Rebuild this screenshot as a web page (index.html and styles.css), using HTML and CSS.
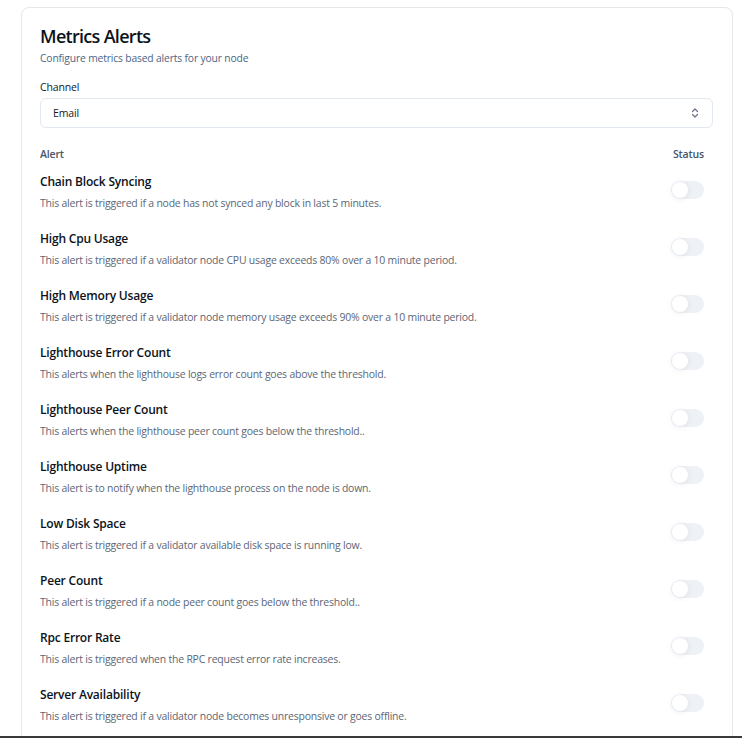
FILE: index.html
```html
<!DOCTYPE html>
<html>
<head>
<meta charset="utf-8">
<link rel="stylesheet" href="styles.css">
</head>
<body>
<div class="card">
  <h1 class="title">Metrics Alerts</h1>
  <p class="subtitle">Configure metrics based alerts for your node</p>
  <label class="label">Channel</label>
  <div class="select">
    <span>Email</span>
    <svg class="chev" width="10" height="12" viewBox="0 0 10 12" fill="none" stroke="#6b7280" stroke-width="1.2" stroke-linecap="round" stroke-linejoin="round"><path d="M2.5 4.5 5 2l2.5 2.5M2.5 7.5 5 10l2.5-2.5"/></svg>
  </div>
  <div class="thead">
    <span>Alert</span>
    <span>Status</span>
  </div>
  <div class="rows">
    <div class="row"><div class="info"><div class="name">Chain Block Syncing</div><div class="desc">This alert is triggered if a node has not synced any block in last 5 minutes.</div></div><div class="toggle"><span class="knob"></span></div></div>
    <div class="row"><div class="info"><div class="name">High Cpu Usage</div><div class="desc">This alert is triggered if a validator node CPU usage exceeds 80% over a 10 minute period.</div></div><div class="toggle"><span class="knob"></span></div></div>
    <div class="row"><div class="info"><div class="name">High Memory Usage</div><div class="desc">This alert is triggered if a validator node memory usage exceeds 90% over a 10 minute period.</div></div><div class="toggle"><span class="knob"></span></div></div>
    <div class="row"><div class="info"><div class="name">Lighthouse Error Count</div><div class="desc">This alerts when the lighthouse logs error count goes above the threshold.</div></div><div class="toggle"><span class="knob"></span></div></div>
    <div class="row"><div class="info"><div class="name">Lighthouse Peer Count</div><div class="desc">This alerts when the lighthouse peer count goes below the threshold..</div></div><div class="toggle"><span class="knob"></span></div></div>
    <div class="row"><div class="info"><div class="name">Lighthouse Uptime</div><div class="desc">This alert is to notify when the lighthouse process on the node is down.</div></div><div class="toggle"><span class="knob"></span></div></div>
    <div class="row"><div class="info"><div class="name">Low Disk Space</div><div class="desc">This alert is triggered if a validator available disk space is running low.</div></div><div class="toggle"><span class="knob"></span></div></div>
    <div class="row"><div class="info"><div class="name">Peer Count</div><div class="desc">This alert is triggered if a node peer count goes below the threshold..</div></div><div class="toggle"><span class="knob"></span></div></div>
    <div class="row"><div class="info"><div class="name">Rpc Error Rate</div><div class="desc">This alert is triggered when the RPC request error rate increases.</div></div><div class="toggle"><span class="knob"></span></div></div>
    <div class="row"><div class="info"><div class="name">Server Availability</div><div class="desc">This alert is triggered if a validator node becomes unresponsive or goes offline.</div></div><div class="toggle"><span class="knob"></span></div></div>
  </div>
</div>
<div class="edge"></div>
</body>
</html>
```
FILE: styles.css
```css
* { box-sizing: border-box; }
html, body { margin: 0; padding: 0; background: #ffffff; }
body {
  font-family: "Open Sans", "Noto Sans", sans-serif;
  color: #0f172a;
  padding: 7px 10px 0 21px;
  height: 738px;
  overflow: hidden;
}
.card {
  border: 1px solid #e5e7eb;
  border-radius: 8px;
  padding: 15px 19px 20px 18px;
  width: 712px;
  height: 760px;
}
.title {
  margin: 0;
  font-size: 18px;
  font-weight: 600;
  line-height: 26px;
  color: #0b1220;
  letter-spacing: -0.7px;
}
.subtitle {
  margin: 2px 0 0;
  font-size: 10.3px;
  line-height: 14px;
  color: #4b6584;
  letter-spacing: -0.15px;
}
.label {
  display: block;
  margin-top: 15px;
  font-size: 10.5px;
  line-height: 14px;
  color: #111827;
  letter-spacing: -0.15px;
}
.select {
  margin-top: 4px;
  height: 30px;
  border: 1px solid #e2e8f0;
  border-radius: 6px;
  display: flex;
  align-items: center;
  justify-content: space-between;
  padding: 0 12px 0 12px;
  font-size: 10.5px;
  color: #111827;
  letter-spacing: -0.15px;
}
.chev { display: block; }
.thead {
  display: flex;
  justify-content: space-between;
  padding: 0 9px 0 0;
  margin-top: 19px;
  font-size: 10.5px;
  font-weight: 600;
  line-height: 14px;
  color: #475569;
  letter-spacing: -0.15px;
}
.rows { margin-top: 13px; }
.row {
  display: flex;
  justify-content: space-between;
  align-items: flex-start;
  height: 57px;
  padding: 0 9px 0 0;
}
.name {
  font-size: 12px;
  font-weight: 600;
  line-height: 16px;
  color: #0b1220;
  letter-spacing: -0.2px;
}
.desc {
  margin-top: 6px;
  font-size: 10.45px;
  line-height: 14px;
  color: #5b6675;
  letter-spacing: -0.2px;
}
.toggle {
  position: relative;
  width: 33px;
  height: 18px;
  border-radius: 9px;
  background: #eef1f6;
  margin-top: 7px;
}
.knob {
  position: absolute;
  left: 1px;
  top: 1px;
  width: 16px;
  height: 16px;
  border-radius: 50%;
  background: #fff;
  box-shadow: 0 1px 6px rgba(0,0,0,0.08);
}
.edge {
  position: fixed;
  left: 0;
  right: 0;
  bottom: 0;
  height: 2px;
  background: #3a3a3a;
}
```
